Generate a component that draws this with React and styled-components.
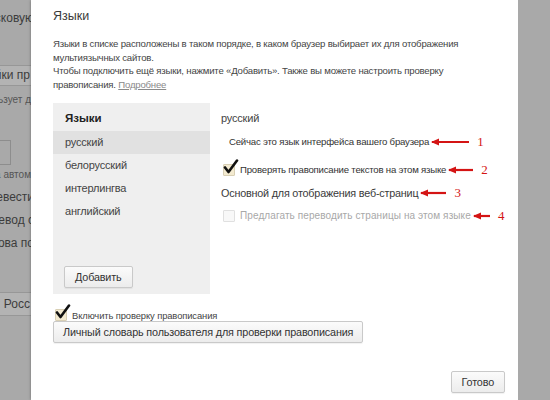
import styled, { createGlobalStyle } from 'styled-components';

const GlobalStyle = createGlobalStyle`
  html, body, #root {
    margin: 0;
    height: 100%;
  }
  body {
    background: #a9a9a9;
    font-family: "Liberation Sans", Arial, sans-serif;
    color: #333;
  }
`;

const languages = ['русский', 'белорусский', 'интерлингва', 'английский'];

function Check({ checked, disabled }) {
  return (
    <CheckBox $disabled={disabled}>
      {checked && (
        <svg width="16" height="16" viewBox="0 0 16 16">
          <path d="M2 8.5 L5.5 13 L14 1.5" fill="none" stroke="#111" strokeWidth="2.6" strokeLinecap="round" strokeLinejoin="round" />
        </svg>
      )}
    </CheckBox>
  );
}

function Pointer({ width, num }) {
  return (
    <Marker>
      <svg width={width} height="8" viewBox={`0 0 ${width} 8`}>
        <path d={`M1 4 L${width - 1} 4`} stroke="#d41414" strokeWidth="2.2" />
        <path d="M0 4 L8 0.5 L8 7.5 Z" fill="#d41414" />
      </svg>
      <Num>{num}</Num>
    </Marker>
  );
}

function App() {
  return (
    <>
      <GlobalStyle />
      <Screen>
        <Backdrop>
          <BackLine>Выбирать поисковую</BackLine>
          <BackButton>Настройки пр</BackButton>
          <BackSmall>Браузер использует д</BackSmall>
          <BackInput />
          <BackSmall $tight>Не предлагать перевод на автом</BackSmall>
          <BackLine>Предлагать перевести</BackLine>
          <BackLine>Показывать перевод с</BackLine>
          <BackLine>Перевод слова по</BackLine>
          <BackButton $wide>Регион: Росс</BackButton>
        </Backdrop>

        <Dialog>
          <Title>Языки</Title>
          <Description>
            Языки в списке расположены в таком порядке, в каком браузер выбирает их для отображения
            <br />
            мультиязычных сайтов.
            <br />
            Чтобы подключить ещё языки, нажмите «Добавить». Также вы можете настроить проверку
            <br />
            правописания. <MoreLink>Подробнее</MoreLink>
          </Description>

          <Columns>
            <ListPanel>
              <ListHeader>Языки</ListHeader>
              {languages.map((lang, i) => (
                <ListItem key={lang} $selected={i === 0}>{lang}</ListItem>
              ))}
              <AddRow>
                <Button>Добавить</Button>
              </AddRow>
            </ListPanel>

            <Details>
              <LangName>русский</LangName>
              <Option $indent>
                <OptionText $small>Сейчас это язык интерфейса вашего браузера</OptionText>
                <Pointer width={39} num="1" />
              </Option>
              <Option $gap>
                <Check checked />
                <OptionText $small>Проверять правописание текстов на этом языке</OptionText>
                <Pointer width={26} num="2" />
              </Option>
              <Option>
                <OptionText>Основной для отображения веб-страниц</OptionText>
                <Pointer width={27} num="3" />
              </Option>
              <Option>
                <Check disabled />
                <OptionText $muted>Предлагать переводить страницы на этом языке</OptionText>
                <Pointer width={18} num="4" />
              </Option>
            </Details>
          </Columns>

          <SpellRow>
            <Check checked />
            <SpellText>Включить проверку правописания</SpellText>
          </SpellRow>
          <Button $wide>Личный словарь пользователя для проверки правописания</Button>

          <Footer>
            <Button>Готово</Button>
          </Footer>
        </Dialog>

        <RightShade />
      </Screen>
    </>
  );
}

const Screen = styled.div`
  display: flex;
  height: 400px;
  width: 550px;
  overflow: hidden;
  background: #a9a9a9;
`;

const Backdrop = styled.div`
  width: 31px;
  flex-shrink: 0;
  overflow: hidden;
  display: flex;
  flex-direction: column;
  align-items: flex-end;
  padding-top: 8px;
  color: #3c3c3c;
  font-size: 12px;
`;

const BackLine = styled.div`
  white-space: nowrap;
  height: 23px;
  line-height: 20px;
  margin-right: -3px;
`;

const BackSmall = styled.div`
  white-space: nowrap;
  font-size: 10px;
  color: #555;
  height: 16px;
  line-height: 16px;
  margin-top: ${p => (p.$tight ? '2px' : '0')};
  margin-bottom: ${p => (p.$tight ? '4px' : '0')};
`;

const BackButton = styled.div`
  white-space: nowrap;
  box-sizing: border-box;
  height: ${p => (p.$wide ? '24px' : '21px')};
  line-height: ${p => (p.$wide ? '22px' : '19px')};
  padding: 0 4px;
  border: 1px solid #979797;
  background: #b3b3b3;
  margin: ${p => (p.$wide ? '36px 0 0' : '34px 0 6px')};
  margin-right: -4px;
`;

const BackInput = styled.div`
  width: 60px;
  height: 23px;
  border: 1px solid #8d8d8d;
  margin: 32px 20px 0 0;
`;

const Dialog = styled.div`
  width: 487px;
  flex-shrink: 0;
  box-sizing: border-box;
  background: #fff;
  box-shadow: 0 0 3px rgba(0, 0, 0, 0.35);
  padding: 7px 13px 0 22px;
  display: flex;
  flex-direction: column;
  align-items: flex-start;
`;

const Title = styled.div`
  font-size: 12.5px;
  color: #3a3a3a;
  line-height: 18px;
`;

const Description = styled.div`
  margin-top: 12px;
  font-size: 9.6px;
  letter-spacing: -0.2px;
  line-height: 13.6px;
  color: #444;
  white-space: nowrap;
`;

const MoreLink = styled.span`
  color: #8a8a8a;
  text-decoration: underline;
`;

const Columns = styled.div`
  display: flex;
  margin-top: 12px;
  align-self: stretch;
`;

const ListPanel = styled.div`
  width: 157px;
  height: 191px;
  background: #efefef;
  display: flex;
  flex-direction: column;
  flex-shrink: 0;
`;

const ListHeader = styled.div`
  font-weight: bold;
  font-size: 11.5px;
  height: 28px;
  line-height: 30px;
  padding-left: 12px;
  color: #222;
`;

const ListItem = styled.div`
  height: 23px;
  line-height: 23px;
  padding-left: 12px;
  font-size: 11px;
  letter-spacing: -0.2px;
  color: #444;
  background: ${p => (p.$selected ? '#e1e1e1' : 'transparent')};
`;

const AddRow = styled.div`
  margin-top: auto;
  padding: 0 0 6px 11px;
`;

const Button = styled.button`
  font-family: inherit;
  font-size: 10.8px;
  letter-spacing: -0.15px;
  color: #333;
  height: 22px;
  padding: 0 ${p => (p.$wide ? '9px' : '10px')};
  background: linear-gradient(#fbfbfb, #ececec);
  border: 1px solid #c9c9c9;
  border-radius: 2px;
  box-shadow: 0 1px 1px rgba(0, 0, 0, 0.06);
  cursor: pointer;
`;

const Details = styled.div`
  padding-left: 11px;
  display: flex;
  flex-direction: column;
`;

const LangName = styled.div`
  font-size: 11px;
  letter-spacing: -0.2px;
  color: #444;
  height: 27px;
  line-height: 30px;
`;

const Option = styled.div`
  display: flex;
  align-items: center;
  height: 23px;
  padding-left: ${p => (p.$indent ? '8px' : '2px')};
  margin-top: ${p => (p.$gap ? '5px' : '0')};
`;

const OptionText = styled.span`
  font-size: ${p => (p.$small ? '9.6px' : p.$muted ? '10px' : '10.8px')};
  letter-spacing: ${p => (p.$muted ? '0.1px' : '-0.2px')};
  color: ${p => (p.$muted ? '#a8a8a8' : p.$small ? '#333' : '#3a3a3a')};
  white-space: nowrap;
  margin-left: ${p => (p.$small || p.$muted ? '0' : '-2px')};
`;

const CheckBox = styled.span`
  position: relative;
  width: 10px;
  height: 10px;
  flex-shrink: 0;
  margin-right: 5px;
  border: 1px solid ${p => (p.$disabled ? '#e0e0e0' : '#d8cfb4')};
  background: ${p => (p.$disabled ? '#f8f8f8' : '#f3ead0')};
  border-radius: 1px;

  svg {
    position: absolute;
    left: -1px;
    top: -6px;
  }
`;

const Marker = styled.span`
  display: flex;
  align-items: center;
  margin-left: 2px;
`;

const Num = styled.span`
  font-family: "Liberation Serif", serif;
  font-size: 13px;
  color: #d41414;
  margin-left: 7px;
`;

const SpellRow = styled.div`
  display: flex;
  align-items: center;
  margin-top: 15px;
  padding-left: 2px;
`;

const SpellText = styled.span`
  font-size: 9.4px;
  letter-spacing: -0.1px;
  color: #444;
`;

const Footer = styled.div`
  align-self: stretch;
  display: flex;
  justify-content: flex-end;
  margin-top: 28px;
`;

const RightShade = styled.div`
  flex: 1;
  background: #a9a9a9;
`;

export default App;
